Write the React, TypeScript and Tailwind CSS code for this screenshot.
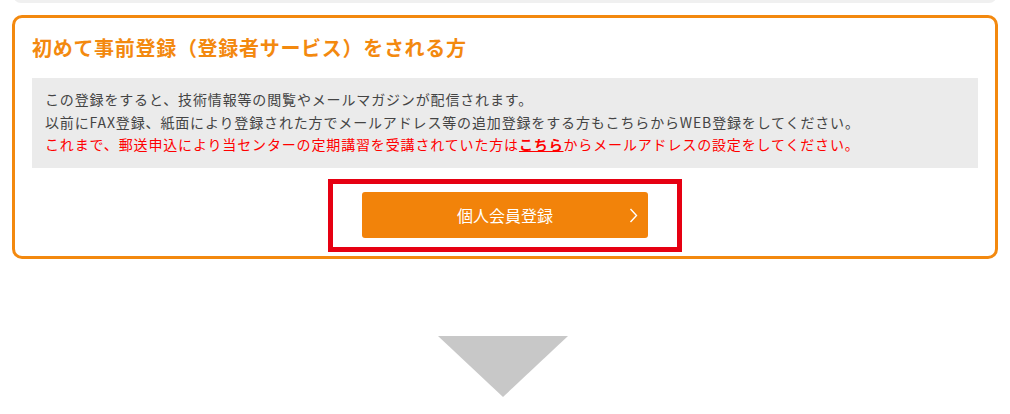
import React from "react";

export default function App() {
  return (
    <div
      className="w-[1010px] h-[414px] bg-white overflow-hidden"
      style={{ fontFamily: '"Noto Sans CJK JP", "Noto Sans", sans-serif' }}
    >
      <div className="mx-[13px] mt-[-20px] h-[23px] rounded-[8px] bg-[#f0f0f0]" />
      <div className="mx-[12px] mt-[12px] border-[3px] border-[#f3890f] rounded-[10px] px-[17px] pt-[16px] pb-[4px]">
        <h2 className="text-[20px] leading-[28px] font-bold text-[#f3890f] tracking-[0.7px]">
          初めて事前登録（登録者サービス）をされる方
        </h2>
        <div className="mt-[16px] bg-[#ebebeb] px-[13px] pt-[10px] pb-[12px] text-[14px] leading-[22.5px] tracking-[0.85px] text-[#444444]">
          <p>この登録をすると、技術情報等の閲覧やメールマガジンが配信されます。</p>
          <p>以前にFAX登録、紙面により登録された方でメールアドレス等の追加登録をする方もこちらからWEB登録をしてください。</p>
          <p className="text-[#ff0000]">
            これまで、郵送申込により当センターの定期講習を受講されていた方は
            <span className="font-bold underline">こちら</span>
            からメールアドレスの設定をしてください。
          </p>
        </div>
        <div className="mt-[11px] mx-auto w-[354px] border-[5px] border-[#e60012] px-[29px] pt-[8px] pb-[9px]">
          <div className="relative h-[46px] w-[286px] rounded-[3px] bg-[#f2830a] flex items-center justify-center">
            <span className="text-white text-[16px] leading-none">個人会員登録</span>
            <svg
              className="absolute right-[10px] top-[16px]"
              width="9"
              height="15"
              viewBox="0 0 9 15"
              fill="none"
            >
              <path d="M1.5 1 L7.5 7.5 L1.5 14" stroke="white" strokeWidth="1.4" />
            </svg>
          </div>
        </div>
      </div>
      <div className="mt-[77px] pl-[438px]">
        <svg width="130" height="61" viewBox="0 0 130 61" className="block">
          <polygon points="0,0 130,0 65,61" fill="#c8c8c8" />
        </svg>
      </div>
    </div>
  );
}
